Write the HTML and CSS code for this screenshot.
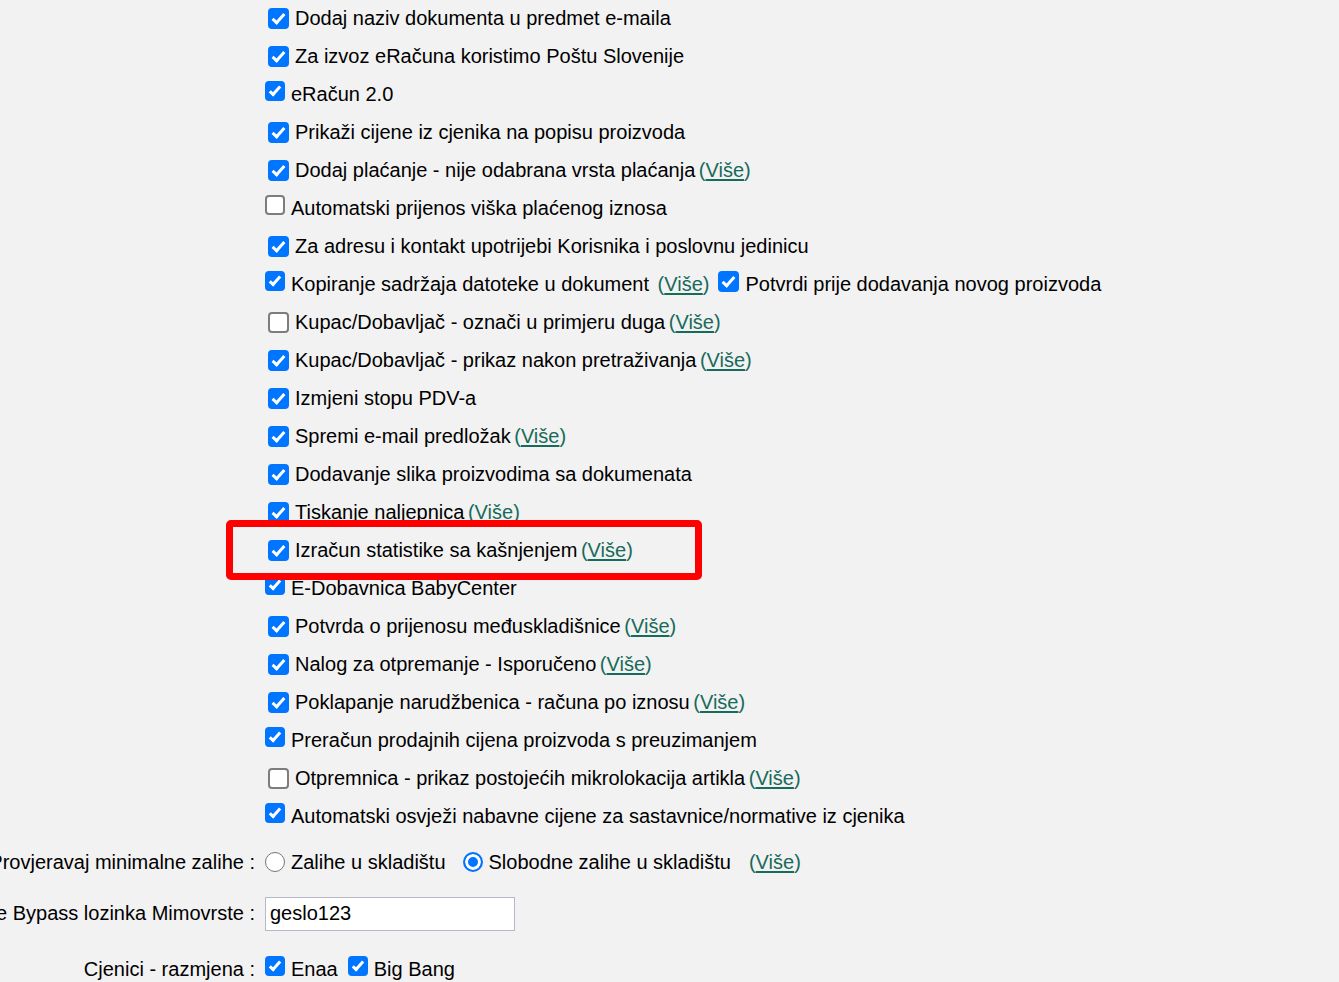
FILE: index.html
```html
<!DOCTYPE html>
<html lang="hr">
<head>
<meta charset="utf-8">
<title>Postavke</title>
<link rel="stylesheet" href="styles.css">
</head>
<body>
<div class="page">
  <div class="list">
    <div class="row"><input type="checkbox" class="cb a" checked><span class="txt">Dodaj naziv dokumenta u predmet e-maila</span></div>
    <div class="row"><input type="checkbox" class="cb a" checked><span class="txt">Za izvoz eRačuna koristimo Poštu Slovenije</span></div>
    <div class="row"><input type="checkbox" class="cb b" checked><span class="txt">eRačun 2.0</span></div>
    <div class="row"><input type="checkbox" class="cb a" checked><span class="txt">Prikaži cijene iz cjenika na popisu proizvoda</span></div>
    <div class="row"><input type="checkbox" class="cb a" checked><span class="txt">Dodaj plaćanje - nije odabrana vrsta plaćanja <a class="more">(<u>Više</u>)</a></span></div>
    <div class="row"><input type="checkbox" class="cb b"><span class="txt">Automatski prijenos viška plaćenog iznosa</span></div>
    <div class="row"><input type="checkbox" class="cb a" checked><span class="txt">Za adresu i kontakt upotrijebi Korisnika i poslovnu jedinicu</span></div>
    <div class="row"><input type="checkbox" class="cb b" checked><span class="txt">Kopiranje sadržaja datoteke u dokument <a class="more wide">(<u>Više</u>)</a></span><input type="checkbox" class="cb a inline" checked><span class="txt">Potvrdi prije dodavanja novog proizvoda</span></div>
    <div class="row"><input type="checkbox" class="cb a"><span class="txt">Kupac/Dobavljač - označi u primjeru duga <a class="more">(<u>Više</u>)</a></span></div>
    <div class="row"><input type="checkbox" class="cb a" checked><span class="txt">Kupac/Dobavljač - prikaz nakon pretraživanja <a class="more">(<u>Više</u>)</a></span></div>
    <div class="row"><input type="checkbox" class="cb a" checked><span class="txt">Izmjeni stopu PDV-a</span></div>
    <div class="row"><input type="checkbox" class="cb a" checked><span class="txt">Spremi e-mail predložak <a class="more">(<u>Više</u>)</a></span></div>
    <div class="row"><input type="checkbox" class="cb a" checked><span class="txt">Dodavanje slika proizvodima sa dokumenata</span></div>
    <div class="row"><input type="checkbox" class="cb a" checked><span class="txt">Tiskanje naljepnica <a class="more">(<u>Više</u>)</a></span></div>
    <div class="row"><input type="checkbox" class="cb a" checked><span class="txt">Izračun statistike sa kašnjenjem <a class="more">(<u>Više</u>)</a></span></div>
    <div class="row"><input type="checkbox" class="cb b" checked><span class="txt">E-Dobavnica BabyCenter</span></div>
    <div class="row"><input type="checkbox" class="cb a" checked><span class="txt">Potvrda o prijenosu međuskladišnice <a class="more">(<u>Više</u>)</a></span></div>
    <div class="row"><input type="checkbox" class="cb a" checked><span class="txt">Nalog za otpremanje - Isporučeno <a class="more">(<u>Više</u>)</a></span></div>
    <div class="row"><input type="checkbox" class="cb a" checked><span class="txt">Poklapanje narudžbenica - računa po iznosu <a class="more">(<u>Više</u>)</a></span></div>
    <div class="row"><input type="checkbox" class="cb b" checked><span class="txt">Preračun prodajnih cijena proizvoda s preuzimanjem</span></div>
    <div class="row"><input type="checkbox" class="cb a"><span class="txt">Otpremnica - prikaz postojećih mikrolokacija artikla <a class="more">(<u>Više</u>)</a></span></div>
    <div class="row"><input type="checkbox" class="cb b" checked><span class="txt">Automatski osvježi nabavne cijene za sastavnice/normative iz cjenika</span></div>
  </div>

  <div class="field f-radio">
    <div class="lbl"><span>Provjeravaj minimalne zalihe :</span></div>
    <input type="radio" name="zal" class="rb">
    <span class="txt">Zalihe u skladištu</span>
    <input type="radio" name="zal" class="rb second" checked>
    <span class="txt">Slobodne zalihe u skladištu</span>
    <a class="more gap">(<u>Više</u>)</a>
  </div>

  <div class="field f-input">
    <div class="lbl"><span>e Bypass lozinka Mimovrste :</span></div>
    <input type="text" class="tx" value="geslo123">
  </div>

  <div class="field f-cjen">
    <div class="lbl"><span>Cjenici - razmjena :</span></div>
    <input type="checkbox" class="cb b" checked>
    <span class="txt">Enaa</span>
    <input type="checkbox" class="cb b next" checked>
    <span class="txt">Big Bang</span>
  </div>

  <div class="highlight"></div>
</div>
</body>
</html>
```

FILE: styles.css
```css
html, body {
  margin: 0;
  padding: 0;
}

body {
  background: #f2f2f2;
  color: #000;
  font-family: "Liberation Sans", Arial, sans-serif;
  font-size: 20px;
  overflow: hidden;
}

.page {
  position: relative;
  width: 1339px;
  height: 982px;
}

.list {
  margin-top: -1px;
  padding-left: 265px;
}

.row {
  display: flex;
  align-items: center;
  height: 38px;
  white-space: nowrap;
}

.txt {
  white-space: nowrap;
  line-height: 23px;
}

.more {
  color: #186a5a;
  text-decoration: none;
  cursor: pointer;
  margin-left: -2px;
}

.more u {
  text-decoration-thickness: 2px;
  text-underline-offset: 2px;
}

.more.wide {
  margin-left: 3px;
}

.more.gap {
  margin-left: 18px;
}

/* checkboxes */
.cb {
  appearance: none;
  -webkit-appearance: none;
  position: relative;
  flex: none;
  box-sizing: border-box;
  margin: 0 6px 0 0;
  background: #fff;
  border: 2px solid #7d7d7d;
  border-radius: 4px;
}

.cb:checked {
  background: #0075ff;
  border-color: #0075ff;
}

.cb:checked::after {
  content: "";
  position: absolute;
  box-sizing: border-box;
  border-right: 3px solid #fff;
  border-bottom: 3px solid #fff;
  transform: rotate(42deg);
}

.cb.a {
  width: 21px;
  height: 21px;
  margin-left: 3px;
}

.cb.a:checked::after {
  left: 5px;
  top: 1px;
  width: 7px;
  height: 13px;
}

.cb.b {
  width: 20px;
  height: 20px;
  margin-bottom: 7px;
}

.cb.b:checked::after {
  left: 5px;
  top: 1px;
  width: 6px;
  height: 12px;
}

.cb.inline {
  margin-left: 9px;
  margin-bottom: 5px;
}

.cb.next {
  margin-left: 10px;
}

/* radios */
.rb {
  appearance: none;
  -webkit-appearance: none;
  flex: none;
  box-sizing: border-box;
  width: 20px;
  height: 20px;
  margin: 0 6px 0 0;
  border: 1.5px solid #767676;
  border-radius: 50%;
  background: #fff;
}

.rb:checked {
  border: 2px solid #0075ff;
  background: #0075ff;
  box-shadow: inset 0 0 0 3px #fff;
}

.rb.second {
  margin-left: 17px;
}

/* bottom fields */
.field {
  display: flex;
  align-items: center;
  white-space: nowrap;
}

.lbl {
  flex: none;
  width: 255px;
  margin-right: 10px;
  display: flex;
  justify-content: flex-end;
  white-space: nowrap;
  line-height: 23px;
}

.f-radio {
  height: 54px;
}

.f-input {
  height: 49px;
}

.f-cjen {
  height: 62px;
}

.tx {
  box-sizing: border-box;
  width: 250px;
  height: 34px;
  margin: 0;
  padding: 0 4px;
  border: 1px solid #b7b7c7;
  background: #fff;
  font-family: "Liberation Sans", Arial, sans-serif;
  font-size: 20px;
  color: #000;
  outline: none;
}

/* red annotation box */
.highlight {
  position: absolute;
  left: 226px;
  top: 521px;
  width: 476px;
  height: 60px;
  box-sizing: border-box;
  border: 7px solid #ff0000;
  border-radius: 5px;
  pointer-events: none;
}
```
